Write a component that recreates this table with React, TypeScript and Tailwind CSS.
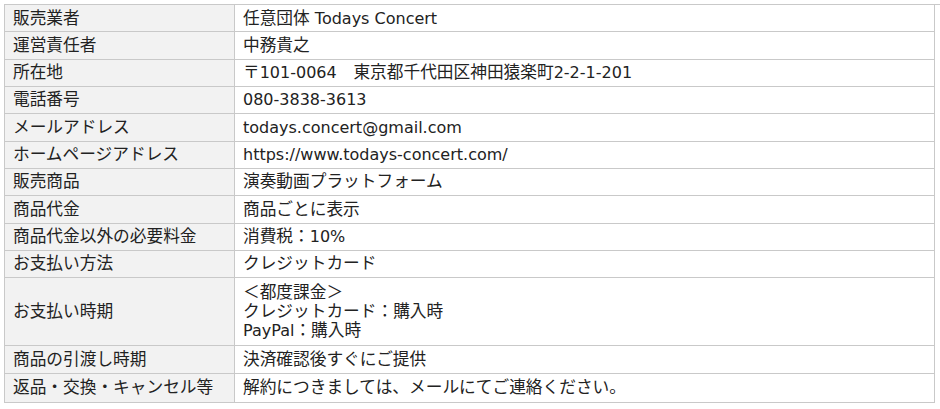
const rows: { label: string; value: string[] }[] = [
  { label: '販売業者', value: ['任意団体 Todays Concert'] },
  { label: '運営責任者', value: ['中務貴之'] },
  { label: '所在地', value: ['〒101-0064　東京都千代田区神田猿楽町2-2-1-201'] },
  { label: '電話番号', value: ['080-3838-3613'] },
  { label: 'メールアドレス', value: ['todays.concert@gmail.com'] },
  { label: 'ホームページアドレス', value: ['https://www.todays-concert.com/'] },
  { label: '販売商品', value: ['演奏動画プラットフォーム'] },
  { label: '商品代金', value: ['商品ごとに表示'] },
  { label: '商品代金以外の必要料金', value: ['消費税：10%'] },
  { label: 'お支払い方法', value: ['クレジットカード'] },
  { label: 'お支払い時期', value: ['＜都度課金＞', 'クレジットカード：購入時', 'PayPal：購入時'] },
  { label: '商品の引渡し時期', value: ['決済確認後すぐにご提供'] },
  { label: '返品・交換・キャンセル等', value: ['解約につきましては、メールにてご連絡ください。'] },
];

// Japanese runs are a touch wider in the original than Noto CJK at 16px
const cjk = /([\u3000-\u30ff\u4e00-\u9fff\uff00-\uffef]+)/;

function Jp({ text }: { text: string }) {
  return (
    <>
      {text.split(cjk).map((part, i) =>
        cjk.test(part) ? (
          <span key={i} className="text-[16.7px]">
            {part}
          </span>
        ) : (
          <span key={i}>{part}</span>
        )
      )}
    </>
  );
}

export default function App() {
  return (
    <div className="w-[940px] h-[409px] bg-white pt-[4px] pl-[4px]">
      <div
        className="grid grid-cols-[230px_700px] border-l border-t border-[#c9c9c9] text-[16px] leading-[19.33px] text-[#222]"
        style={{ fontFamily: '"DejaVu Sans", "Noto Sans CJK JP", sans-serif' }}
      >
        {rows.map((r, idx) => {
          const multi = r.value.length > 1;
          const last = idx === rows.length - 1;
          const pad = multi ? 'py-[4.5px]' : last ? 'py-[4.5px]' : 'py-[3.5px]';
          return (
            <div key={r.label} className="contents">
              <div className={`flex items-center bg-[#f2f2f2] border-r border-b border-[#c9c9c9] px-[8px] ${pad}`}>
                <Jp text={r.label} />
              </div>
              <div className={`border-r border-b border-[#c9c9c9] px-[8px] ${pad}`}>
                {r.value.map((v) => (
                  <div key={v}>
                    <Jp text={v} />
                  </div>
                ))}
              </div>
            </div>
          );
        })}
      </div>
    </div>
  );
}
